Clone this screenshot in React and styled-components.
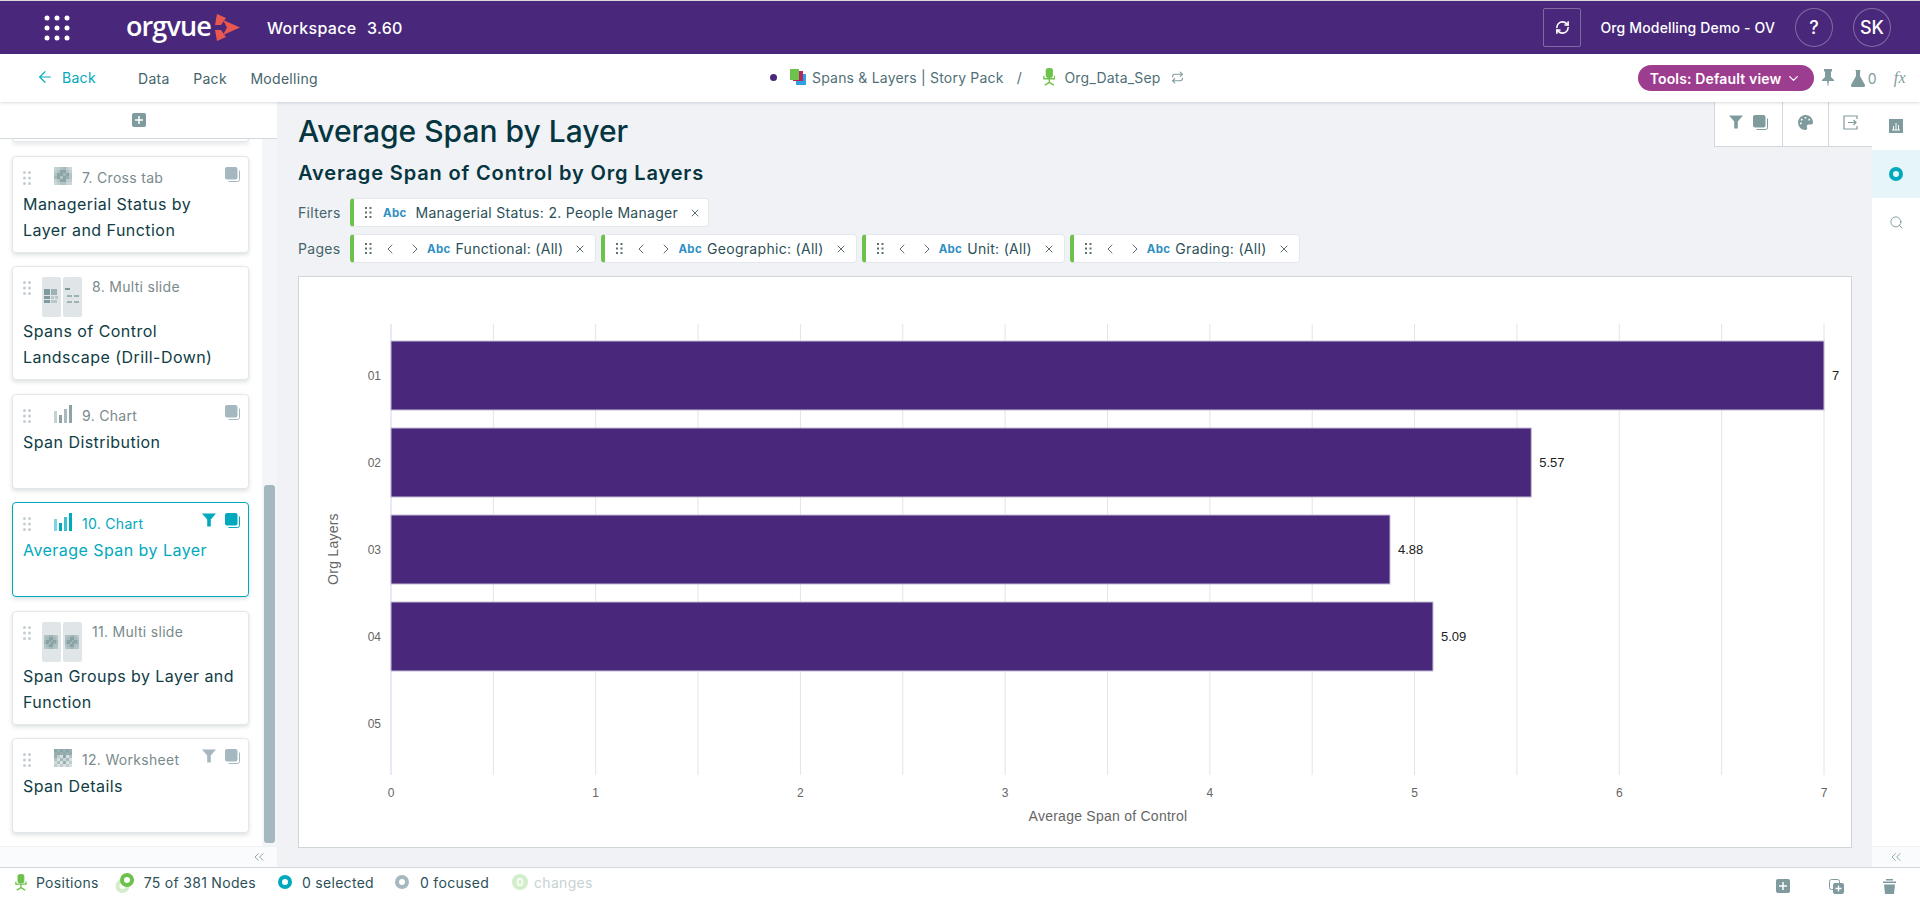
import React from "react";
import styled, { createGlobalStyle } from "styled-components";
import {
  ArrowLeft,
  ChevronDown,
  ChevronLeft,
  ChevronRight,
  ChevronsLeft,
  RefreshCw,
  Repeat,
  Search,
  X
} from "lucide-react";
import { FaPalette } from "react-icons/fa";

const PURPLE = "#49287b";
const TEAL = "#00a9bd";
const INK = "#0f3d45";
const ICON = "#7f9b9d";
const GREEN = "#6cc24a";

const GlobalStyle = createGlobalStyle`
  html, body {
    margin: 0;
    padding: 0;
    height: 100%;
    overflow: hidden;
  }
  body {
    background: #d9d9dc;
    font-family: Inter, "Liberation Sans", sans-serif;
    letter-spacing: 0.3px;
    color: ${INK};
  }
  * {
    box-sizing: border-box;
  }
`;

const Page = styled.div`
  height: 100vh;
  padding-top: 1px;
  display: flex;
  flex-direction: column;
  overflow: hidden;
`;

const Header = styled.header`
  height: 53px;
  flex: none;
  display: flex;
  align-items: center;
  background: ${PURPLE};
  color: #fff;
  padding-left: 44px;
  padding-right: 29px;
`;

const Logo = styled.div`
  display: flex;
  align-items: center;
  margin-left: 56px;
  width: 141px;
`;

const LogoWord = styled.span`
  font-family: "Open Sans", Inter, sans-serif;
  font-size: 27px;
  font-weight: 600;
  letter-spacing: -0.9px;
  line-height: 1;
  margin-top: -4px;
  margin-right: 3px;
`;

const Product = styled.div`
  font-size: 16px;
  font-weight: 500;
  word-spacing: 6px;
`;

const HeaderRight = styled.div`
  margin-left: auto;
  display: flex;
  align-items: center;
`;

const SyncBox = styled.div`
  width: 38px;
  height: 39px;
  border: 1px solid rgba(255, 255, 255, 0.3);
  border-radius: 2px;
  display: flex;
  align-items: center;
  justify-content: center;
  margin-right: 19px;
`;

const Tenant = styled.div`
  font-size: 14px;
  font-weight: 500;
  letter-spacing: 0.15px;
  margin-right: 20px;
`;

const RoundButton = styled.div`
  width: 38px;
  height: 39px;
  border: 1px solid rgba(255, 255, 255, 0.3);
  border-radius: 50%;
  display: flex;
  align-items: center;
  justify-content: center;
  font-size: 18px;
  font-weight: 500;
  letter-spacing: 0;
  margin-left: ${(p) => p.$gap || 0}px;
`;

const Nav = styled.nav`
  height: 48px;
  flex: none;
  display: flex;
  align-items: center;
  background: #fff;
  box-shadow: 0 1px 3px rgba(40, 60, 70, 0.18);
  position: relative;
  z-index: 2;
  font-size: 14px;
  color: #44646a;
`;

const NavLeft = styled.div`
  width: 770px;
  padding-left: 36px;
  display: flex;
  align-items: center;
`;

const BackLink = styled.div`
  display: flex;
  align-items: center;
  gap: 8px;
  color: ${TEAL};
  width: 102px;
  margin-top: -2px;
`;

const NavItem = styled.div`
  margin-right: 23.5px;
`;

const Crumbs = styled.div`
  display: flex;
  align-items: center;
  color: #4f7076;
  letter-spacing: 0.2px;
  margin-top: -2px;
`;

const Dot = styled.span`
  width: 7px;
  height: 7px;
  border-radius: 50%;
  background: ${PURPLE};
  margin-right: 13px;
`;

const Slash = styled.span`
  margin: 0 21px 0 13px;
`;

const SourceName = styled.span`
  margin: 0 10px 0 9px;
`;

const NavRight = styled.div`
  margin-left: auto;
  display: flex;
  align-items: center;
  padding-right: 14px;
  color: ${ICON};
`;

const ToolsPill = styled.div`
  width: 176px;
  height: 26px;
  border-radius: 13px;
  background: #9c3d8f;
  color: #fff;
  font-weight: 600;
  font-size: 14px;
  letter-spacing: 0.15px;
  display: flex;
  align-items: center;
  justify-content: space-between;
  padding: 0 13px 0 12px;
  margin-right: 8px;
`;

const Counter = styled.span`
  display: flex;
  align-items: center;
  gap: 3px;
  margin-left: 17px;
  font-size: 14px;
`;

const Fx = styled.span`
  font-family: "Liberation Serif", serif;
  font-style: italic;
  font-size: 16px;
  margin-left: 17px;
`;

const Body = styled.div`
  flex: 1;
  min-height: 0;
  display: flex;
`;

const Sidebar = styled.aside`
  width: 277px;
  flex: none;
  display: flex;
  flex-direction: column;
  background: #f3f5f8;
`;

const AddBar = styled.div`
  height: 37px;
  flex: none;
  background: #fff;
  border-bottom: 1px solid #d3d9dd;
  display: flex;
  align-items: center;
  justify-content: center;
  padding-bottom: 1px;
`;

const Scroller = styled.div`
  flex: 1;
  min-height: 0;
  display: flex;
`;

const CardList = styled.div`
  width: 262px;
  flex: none;
  background: #fff;
  padding: 0 13px 0 12px;
  display: flex;
  flex-direction: column;
  gap: 13.5px;
  overflow: hidden;
`;

const ScrollTrack = styled.div`
  flex: 1;
  display: flex;
  flex-direction: column;
  justify-content: flex-end;
  padding: 0 2px 3px 2px;
`;

const ScrollThumb = styled.div`
  height: 358px;
  width: 11px;
  border-radius: 3px;
  background: #a6b8bf;
`;

const CollapseBar = styled.div`
  height: 21px;
  flex: none;
  background: #fafbfc;
  border-top: 1px solid #eef1f3;
  display: flex;
  align-items: center;
  justify-content: ${(p) => (p.$center ? "center" : "flex-end")};
  padding-right: ${(p) => (p.$center ? 0 : 10)}px;
  color: ${ICON};
`;

const CardStub = styled.div`
  height: 3px;
  flex: none;
  background: #fff;
  border: 1px solid #e3e7ea;
  border-top: 0;
  border-radius: 0 0 4px 4px;
  box-shadow: 0 2px 4px rgba(40, 60, 70, 0.16);
`;

const Card = styled.div`
  flex: none;
  min-height: 95px;
  background: #fff;
  border: 1px solid ${(p) => (p.$active ? TEAL : "#e3e7ea")};
  border-radius: 4px;
  box-shadow: 0 2px 4px rgba(40, 60, 70, 0.16);
  padding: 0 10px 9px 10px;
  color: ${(p) => (p.$active ? TEAL : INK)};
`;

const CardHead = styled.div`
  height: ${(p) => (p.$tall ? 51 : 34)}px;
  display: flex;
  align-items: flex-start;
  padding-top: 10px;
`;

const Grip = styled.svg`
  flex: none;
  margin-top: 4px;
`;

const ThumbSlot = styled.div`
  flex: none;
  margin-left: ${(p) => (p.$tall ? 11 : 23)}px;
  margin-right: 10px;
  display: flex;
`;

const TypeLabel = styled.div`
  font-size: 14px;
  line-height: 20px;
  margin-top: ${(p) => (p.$tall ? 0 : 1)}px;
  color: ${(p) => (p.$active ? TEAL : "#7a8a8c")};
`;

const CardIcons = styled.div`
  margin-left: auto;
  display: flex;
  gap: 9px;
  margin-right: -2px;
`;

const CardTitle = styled.div`
  font-size: 16px;
  line-height: 26px;
  letter-spacing: 0.45px;
`;

const Main = styled.main`
  flex: 1;
  min-width: 0;
  position: relative;
  background: #f0f2f6;
  padding: 11px 20px 19px 21px;
  display: flex;
  flex-direction: column;
`;

const Title = styled.h1`
  margin: 0;
  font-size: 30px;
  line-height: 36px;
  font-weight: 500;
  letter-spacing: 0;
  color: #05353f;
`;

const Subtitle = styled.h2`
  margin: 12px 0 13px;
  font-size: 20px;
  line-height: 24px;
  font-weight: 600;
  letter-spacing: 0.85px;
  color: #05353f;
`;

const ChipRow = styled.div`
  display: flex;
  align-items: center;
  gap: 5px;
  margin-bottom: ${(p) => p.$after}px;
`;

const RowLabel = styled.div`
  width: 47px;
  font-size: 14px;
  color: #44646a;
`;

const Chip = styled.div`
  height: 29px;
  background: #fff;
  border: 1px solid #e4e8ec;
  border-left: 4px solid ${GREEN};
  border-radius: 4px;
  display: flex;
  align-items: center;
  padding-left: 11px;
  padding-right: ${(p) => p.$tail || 9}px;
  font-size: 14px;
  color: #2b5058;
  white-space: nowrap;
`;

const ChipGrip = styled.svg`
  flex: none;
  margin-right: ${(p) => p.$after}px;
`;

const Abc = styled.span`
  font-size: 11.5px;
  font-weight: 700;
  color: #2f8fc4;
  margin: 0 ${(p) => p.$after}px 0 ${(p) => p.$before}px;
`;

const ChipClose = styled(X)`
  margin-left: ${(p) => p.$before}px;
  color: #5c7075;
  flex: none;
`;

const Pager = styled.div`
  display: flex;
  gap: 9px;
  color: #5c7075;
  margin-right: 4px;
`;

const ChartCard = styled.section`
  flex: 1;
  min-height: 0;
  background: #fff;
  border: 1px solid #cfd6da;
`;

const ChartSvg = styled.svg`
  display: block;
  width: 100%;
  height: 100%;
  font-family: "Liberation Sans", Arial, sans-serif;
  letter-spacing: 0;
`;

const AxisTitle = styled.text`
  font-size: 14px;
  fill: #666;
  letter-spacing: 0.25px;
  text-anchor: middle;
`;

const Toolbar = styled.div`
  position: absolute;
  top: 0;
  right: 0;
  height: 45px;
  display: flex;
  background: #fff;
  border: 1px solid #d0d8dc;
  border-top: 0;
  border-right: 0;
  color: ${ICON};
`;

const ToolCell = styled.div`
  width: ${(p) => p.$w}px;
  display: flex;
  align-items: center;
  justify-content: center;
  gap: 10px;
  padding-bottom: 4px;
  & + & {
    border-left: 1px solid #d0d8dc;
  }
`;

const Rail = styled.aside`
  width: 48px;
  flex: none;
  background: #fff;
  display: flex;
  flex-direction: column;
  color: ${ICON};
`;

const RailItem = styled.div`
  height: 48px;
  display: flex;
  align-items: center;
  justify-content: center;
  background: ${(p) => (p.$active ? "#e5f5f8" : "transparent")};
`;

const RailSpacer = styled.div`
  flex: 1;
`;

const StatusBar = styled.footer`
  height: 35px;
  flex: none;
  background: #fff;
  border-top: 1px solid #d3d9dd;
  display: flex;
  align-items: center;
  padding-left: 15px;
  padding-right: 24px;
  font-size: 14px;
  color: #2b5058;
`;

const StatusItem = styled.div`
  display: flex;
  align-items: center;
  gap: ${(p) => p.$gap || 7}px;
  margin-right: ${(p) => p.$after}px;
  margin-top: -6px;
  color: ${(p) => (p.$muted ? "#c6d2d4" : "inherit")};
`;

const Ring = styled.span`
  width: 14px;
  height: 14px;
  border-radius: 50%;
  border: 4px solid ${(p) => p.$color};
  display: inline-block;
`;

const GhostSvg = styled.svg`
  overflow: visible;
  flex: none;
`;

const ChangeBadge = styled.span`
  width: 16px;
  height: 16px;
  border-radius: 50%;
  background: #d3eecb;
  color: #fff;
  font-size: 11px;
  font-weight: 600;
  display: flex;
  align-items: center;
  justify-content: center;
`;

const StatusActions = styled.div`
  margin-left: auto;
  margin-top: 2px;
  display: flex;
  align-items: center;
  gap: 39px;
  color: ${ICON};
`;

const GridIcon = () => (
  <svg width="26" height="26" viewBox="0 0 26 26" fill="#fff">
    {[3, 13, 23].map((y) =>
      [3, 13, 23].map((x) => <circle key={`${x}-${y}`} cx={x} cy={y} r="2.5" />)
    )}
  </svg>
);

const LogoMark = () => (
  <svg width="26" height="27" viewBox="0 0 26 27">
    <path d="M3 0 L12 4 L7 11 L1 11 Z" fill="#e8584f" />
    <path d="M9 6 L26 13.5 L9 21 L13 13.5 Z" fill="#e8584f" />
    <path d="M1 16 L7 16 L12 23 L3 27 Z" fill="#e8584f" />
  </svg>
);

const GripIcon = ({ color = "#c5ced2" }) => (
  <Grip width="8" height="14" viewBox="0 0 8 14" fill={color}>
    {[1.5, 7, 12.5].map((y) =>
      [1.5, 6.5].map((x) => <circle key={`${x}-${y}`} cx={x} cy={y} r="1.5" />)
    )}
  </Grip>
);

const ChipGripIcon = ({ after }) => (
  <ChipGrip $after={after} width="7" height="11" viewBox="0 0 7 11" fill="#5c7075">
    {[1, 5.5, 10].map((y) =>
      [1, 5.5].map((x) => <rect key={`${x}-${y}`} x={x - 1} y={y - 1} width="2" height="2" />)
    )}
  </ChipGrip>
);

const CopyIcon = ({ color = "#a6b8bf" }) => (
  <svg width="15" height="15" viewBox="0 0 15 15">
    <path d="M3.5 14.5 H12.5 Q14.5 14.5 14.5 12.5 V3.5" fill="none" stroke={color} strokeWidth="1" />
    <rect x="0" y="0" width="12.5" height="12.5" rx="2" fill={color} />
  </svg>
);

const FilterIcon = ({ color = "#a6b8bf", size = 14 }) => (
  <svg width={size} height={size} viewBox="0 0 14 14" fill={color}>
    <path d="M0 0.5 H14 L8.8 6.5 V13.5 H5.2 V6.5 Z" />
  </svg>
);

const BarsIcon = ({ color = "#8ea3a8" }) => (
  <svg width="18" height="18" viewBox="0 0 18 18" fill={color}>
    <rect x="0" y="6" width="3" height="12" opacity="0.5" />
    <rect x="5" y="10" width="3" height="8" />
    <rect x="10" y="4" width="3" height="14" opacity="0.75" />
    <rect x="15" y="0" width="3" height="18" />
  </svg>
);

const Mosaic = ({ cells, size = 18, tone = "#7f9b9d" }) => (
  <svg width={size} height={size} viewBox="0 0 6 6" shapeRendering="crispEdges">
    {cells.map((row, y) =>
      row.map((o, x) => (
        <rect key={`${x}-${y}`} x={x} y={y} width="1" height="1" fill={tone} opacity={o} />
      ))
    )}
  </svg>
);

const CROSS = [
  [0.45, 0.5, 0.6, 0.7, 0.5, 0.4],
  [0.5, 0.6, 0.9, 0.9, 0.6, 0.45],
  [0.6, 0.9, 0.9, 0.7, 0.9, 0.6],
  [0.7, 0.9, 0.6, 0.9, 0.8, 0.6],
  [0.45, 0.6, 0.9, 0.9, 0.5, 0.5],
  [0.4, 0.5, 0.6, 0.6, 0.45, 0.4]
];

const SHEET = [
  [0.9, 0.8, 0.9, 0.8, 0.9, 0.8],
  [0.8, 0.85, 0.8, 0.85, 0.8, 0.85],
  [0.8, 0.5, 0.3, 0.9, 0.3, 0.6],
  [0.6, 0.3, 0.7, 0.4, 0.7, 0.3],
  [0.35, 0.6, 0.3, 0.8, 0.3, 0.5],
  [0.5, 0.3, 0.5, 0.3, 0.5, 0.3]
];

const LandscapeThumb = () => (
  <svg width="40" height="40" viewBox="0 0 40 40">
    <rect x="0" y="0" width="19" height="40" rx="2" fill="#e0e6e8" />
    <rect x="21" y="0" width="19" height="40" rx="2" fill="#e0e6e8" />
    <rect x="2" y="12" width="6" height="6" fill="#7f9b9d" />
    <rect x="9" y="12" width="6" height="6" fill="#9db2b5" />
    <rect x="2" y="19" width="6" height="3" fill="#7f9b9d" />
    <rect x="9" y="19" width="3" height="3" fill="#b9c8ca" />
    <rect x="13" y="19" width="3" height="3" fill="#b9c8ca" />
    <rect x="2" y="23" width="6" height="3" fill="#7f9b9d" />
    <rect x="9" y="23" width="6" height="3" fill="#b9c8ca" />
    <rect x="23" y="11" width="5" height="2" fill="#7f9b9d" />
    <rect x="25" y="18" width="5" height="2" fill="#9db2b5" />
    <rect x="32" y="18" width="5" height="2" fill="#9db2b5" />
    <rect x="25" y="24" width="5" height="2" fill="#9db2b5" />
    <rect x="32" y="24" width="5" height="2" fill="#9db2b5" />
  </svg>
);

const GroupsThumb = () => (
  <svg width="40" height="40" viewBox="0 0 40 40">
    <rect x="0" y="0" width="19" height="40" rx="2" fill="#e0e6e8" />
    <rect x="21" y="0" width="19" height="40" rx="2" fill="#e0e6e8" />
    <svg x="2" y="13" width="14" height="14" viewBox="0 0 6 6" shapeRendering="crispEdges">
      {CROSS.map((row, y) =>
        row.map((o, x) => (
          <rect key={`l${x}-${y}`} x={x} y={y} width="1" height="1" fill={ICON} opacity={o} />
        ))
      )}
    </svg>
    <svg x="23" y="13" width="14" height="14" viewBox="0 0 6 6" shapeRendering="crispEdges">
      {CROSS.map((row, y) =>
        row.map((o, x) => (
          <rect key={`r${x}-${y}`} x={x} y={y} width="1" height="1" fill={ICON} opacity={o} />
        ))
      )}
    </svg>
  </svg>
);

const Chair = ({ size = 18 }) => (
  <svg width={size * 0.7} height={size} viewBox="0 0 14 20" fill="none" stroke={GREEN}>
    <rect x="3.5" y="0.5" width="7" height="10" rx="2" fill={GREEN} />
    <path d="M1 9 V12 H13 V9" strokeWidth="1.5" />
    <path d="M7 12 V17 M2 19 L7 16 L12 19" strokeWidth="1.5" />
  </svg>
);

const NodesIcon = () => (
  <GhostSvg width="14" height="14" viewBox="0 0 14 14" fill="none">
    <circle cx="2.5" cy="11" r="5" stroke={GREEN} strokeWidth="4" opacity="0.3" />
    <circle cx="7" cy="5" r="5" stroke={GREEN} strokeWidth="4" fill="#fff" />
  </GhostSvg>
);

const PackIcon = () => (
  <svg width="16" height="16" viewBox="0 0 16 16" style={{ marginRight: 6 }}>
    <rect x="6" y="5" width="10" height="11" fill="#2f9fe0" />
    <rect x="3" y="2" width="10" height="10" fill="#b5255f" />
    <rect x="0" y="0" width="9" height="11" fill={GREEN} />
  </svg>
);

const PinIcon = () => (
  <svg width="12" height="18" viewBox="0 0 12 18" fill={ICON}>
    <path d="M2 0 H10 V2 L9 3 V8 L12 11 V12 H7 L6 18 L5 12 H0 V11 L3 8 V3 L2 2 Z" />
  </svg>
);

const FlaskIcon = () => (
  <svg width="14" height="17" viewBox="0 0 14 17" fill={ICON}>
    <path d="M4.5 0 H9.5 V1 H9 V6 L14 15 Q14.5 17 12.5 17 H1.5 Q-0.5 17 0 15 L5 6 V1 H4.5 Z" />
  </svg>
);

const ExportIcon = () => (
  <svg width="15" height="15" viewBox="0 0 15 15" fill="none" stroke={ICON}>
    <path d="M14 4 V1 H1 V14 H14 V11" strokeWidth="1.2" />
    <path d="M5 7.5 H13 M10.5 5 L13 7.5 L10.5 10" strokeWidth="1.2" />
  </svg>
);

const ChartTabIcon = () => (
  <svg width="14" height="14" viewBox="0 0 14 14">
    <rect width="14" height="14" fill={ICON} />
    <path d="M3 11 H11 M4.5 11 V7 M7 11 V4 M9.5 11 V6" stroke="#fff" strokeWidth="1" />
  </svg>
);

const PlusSquare = ({ size = 14 }) => (
  <svg width={size} height={size} viewBox="0 0 14 14">
    <rect width="14" height="14" rx="2" fill={ICON} />
    <path d="M7 3 V11 M3 7 H11" stroke="#fff" strokeWidth="1.5" />
  </svg>
);

const DuplicateIcon = () => (
  <svg width="15" height="15" viewBox="0 0 15 15">
    <rect x="0.5" y="0.5" width="10" height="10" rx="2" fill="none" stroke={ICON} />
    <rect x="4" y="4" width="11" height="11" rx="2" fill={ICON} />
    <path d="M9.5 6.5 V12.5 M6.5 9.5 H12.5" stroke="#fff" strokeWidth="1.3" />
  </svg>
);

const TrashIcon = () => (
  <svg width="13" height="15" viewBox="0 0 13 15" fill={ICON}>
    <rect x="3" y="0" width="7" height="1.5" />
    <rect x="0" y="2.5" width="13" height="1.5" />
    <path d="M1 5.5 H12 L11 15 H2 Z" />
  </svg>
);

const AXIS_LEFT = 391;
const UNIT = (1824 - 391) / 7;
const BARS = [
  { name: "01", value: 7, label: "7", top: 341 },
  { name: "02", value: 5.57, label: "5.57", top: 428 },
  { name: "03", value: 4.88, label: "4.88", top: 515 },
  { name: "04", value: 5.09, label: "5.09", top: 602 }
];

const Chart = () => (
  <ChartSvg viewBox="299 277 1552 570">
    {Array.from({ length: 14 }, (_, i) => i + 1).map((i) => (
      <line
        key={i}
        x1={AXIS_LEFT + (UNIT / 2) * i}
        x2={AXIS_LEFT + (UNIT / 2) * i}
        y1="324"
        y2="775"
        stroke="#e4e4e4"
        strokeWidth="1"
      />
    ))}
    <line x1={AXIS_LEFT} x2={AXIS_LEFT} y1="324" y2="775" stroke="#ccd6eb" />
    {BARS.map((b) => (
      <g key={b.name}>
        <rect
          x={AXIS_LEFT}
          y={b.top}
          width={b.value * UNIT}
          height="69"
          fill={PURPLE}
          stroke="#c4bcd8"
          strokeWidth="1"
        />
        <text x={AXIS_LEFT + b.value * UNIT + 8} y={b.top + 39} fontSize="13" fill="#222">
          {b.label}
        </text>
      </g>
    ))}
    {["01", "02", "03", "04", "05"].map((n, i) => (
      <text key={n} x="381" y={380 + i * 87} fontSize="12" fill="#666" textAnchor="end">
        {n}
      </text>
    ))}
    {[0, 1, 2, 3, 4, 5, 6, 7].map((n) => (
      <text key={n} x={AXIS_LEFT + n * UNIT} y="797" fontSize="12" fill="#666" textAnchor="middle">
        {n}
      </text>
    ))}
    <AxisTitle x="1108" y="821">
      Average Span of Control
    </AxisTitle>
    <AxisTitle x="338" y="549" transform="rotate(-90 338 549)">
      Org Layers
    </AxisTitle>
  </ChartSvg>
);

const StoryCard = ({ thumb, type, title, tall, active, filtered, copy = true }) => (
  <Card $active={active}>
    <CardHead $tall={tall}>
      <GripIcon />
      <ThumbSlot $tall={tall}>{thumb}</ThumbSlot>
      <TypeLabel $active={active} $tall={tall}>{type}</TypeLabel>
      <CardIcons>
        {filtered && <FilterIcon color={active ? TEAL : "#a6b8bf"} />}
        {copy && <CopyIcon color={active ? TEAL : "#a6b8bf"} />}
      </CardIcons>
    </CardHead>
    <CardTitle>{title}</CardTitle>
  </Card>
);

const PageChip = ({ label }) => (
  <Chip>
    <ChipGripIcon after={10} />
    <Pager>
      <ChevronLeft size={16} strokeWidth={1.5} />
      <ChevronRight size={16} strokeWidth={1.5} />
    </Pager>
    <Abc $after={5} $before={0}>Abc</Abc>
    {label}
    <ChipClose size={12} $before={11} />
  </Chip>
);

const App = () => (
  <Page>
    <GlobalStyle />
    <Header>
      <GridIcon />
      <Logo>
        <LogoWord>orgvue</LogoWord>
        <LogoMark />
      </Logo>
      <Product>Workspace 3.60</Product>
      <HeaderRight>
        <SyncBox>
          <RefreshCw size={15} strokeWidth={2.5} />
        </SyncBox>
        <Tenant>Org Modelling Demo - OV</Tenant>
        <RoundButton>?</RoundButton>
        <RoundButton $gap={20}>SK</RoundButton>
      </HeaderRight>
    </Header>
    <Nav>
      <NavLeft>
        <BackLink>
          <ArrowLeft size={18} strokeWidth={1.5} />
          Back
        </BackLink>
        <NavItem>Data</NavItem>
        <NavItem>Pack</NavItem>
        <NavItem>Modelling</NavItem>
      </NavLeft>
      <Crumbs>
        <Dot />
        <PackIcon />
        Spans &amp; Layers | Story Pack
        <Slash>/</Slash>
        <Chair />
        <SourceName>Org_Data_Sep</SourceName>
        <Repeat size={13} color={ICON} />
      </Crumbs>
      <NavRight>
        <ToolsPill>
          Tools: Default view
          <ChevronDown size={15} />
        </ToolsPill>
        <PinIcon />
        <Counter>
          <FlaskIcon />0
        </Counter>
        <Fx>fx</Fx>
      </NavRight>
    </Nav>
    <Body>
      <Sidebar>
        <AddBar>
          <PlusSquare />
        </AddBar>
        <Scroller>
          <CardList>
            <CardStub />
            <StoryCard
              thumb={<Mosaic cells={CROSS} />}
              type="7. Cross tab"
              title="Managerial Status by Layer and Function"
            />
            <StoryCard
              tall
              copy={false}
              thumb={<LandscapeThumb />}
              type="8. Multi slide"
              title="Spans of Control Landscape (Drill-Down)"
            />
            <StoryCard thumb={<BarsIcon />} type="9. Chart" title="Span Distribution" />
            <StoryCard
              active
              filtered
              thumb={<BarsIcon color={TEAL} />}
              type="10. Chart"
              title="Average Span by Layer"
            />
            <StoryCard
              tall
              copy={false}
              thumb={<GroupsThumb />}
              type="11. Multi slide"
              title="Span Groups by Layer and Function"
            />
            <StoryCard
              filtered
              thumb={<Mosaic cells={SHEET} />}
              type="12. Worksheet"
              title="Span Details"
            />
          </CardList>
          <ScrollTrack>
            <ScrollThumb />
          </ScrollTrack>
        </Scroller>
        <CollapseBar>
          <ChevronsLeft size={16} strokeWidth={1.3} />
        </CollapseBar>
      </Sidebar>
      <Main>
        <Title>Average Span by Layer</Title>
        <Subtitle>Average Span of Control by Org Layers</Subtitle>
        <ChipRow $after={7}>
          <RowLabel>Filters</RowLabel>
          <Chip $tail={7}>
            <ChipGripIcon after={0} />
            <Abc $before={11} $after={9}>Abc</Abc>
            Managerial Status: 2. People Manager
            <ChipClose size={12} $before={11} />
          </Chip>
        </ChipRow>
        <ChipRow $after={13}>
          <RowLabel>Pages</RowLabel>
          <PageChip label="Functional: (All)" />
          <PageChip label="Geographic: (All)" />
          <PageChip label="Unit: (All)" />
          <PageChip label="Grading: (All)" />
        </ChipRow>
        <ChartCard>
          <Chart />
        </ChartCard>
        <Toolbar>
          <ToolCell $w={67}>
            <FilterIcon color={ICON} />
            <CopyIcon color={ICON} />
          </ToolCell>
          <ToolCell $w={46}>
            <FaPalette size={15} />
          </ToolCell>
          <ToolCell $w={44}>
            <ExportIcon />
          </ToolCell>
        </Toolbar>
      </Main>
      <Rail>
        <RailItem>
          <ChartTabIcon />
        </RailItem>
        <RailItem $active>
          <Ring $color={TEAL} />
        </RailItem>
        <RailItem>
          <Search size={15} strokeWidth={1.5} />
        </RailItem>
        <RailSpacer />
        <CollapseBar $center>
          <ChevronsLeft size={16} strokeWidth={1.3} />
        </CollapseBar>
      </Rail>
    </Body>
    <StatusBar>
      <StatusItem $after={21} $gap={9}>
        <Chair size={17} />
        Positions
      </StatusItem>
      <StatusItem $after={22} $gap={10}>
        <NodesIcon />
        75 of 381 Nodes
      </StatusItem>
      <StatusItem $after={21} $gap={10}>
        <Ring $color={TEAL} />
        0 selected
      </StatusItem>
      <StatusItem $after={23} $gap={11}>
        <Ring $color="#a6b8bf" />
        0 focused
      </StatusItem>
      <StatusItem $after={0} $gap={6} $muted>
        <ChangeBadge>0</ChangeBadge>
        changes
      </StatusItem>
      <StatusActions>
        <PlusSquare />
        <DuplicateIcon />
        <TrashIcon />
      </StatusActions>
    </StatusBar>
  </Page>
);

export default App;
